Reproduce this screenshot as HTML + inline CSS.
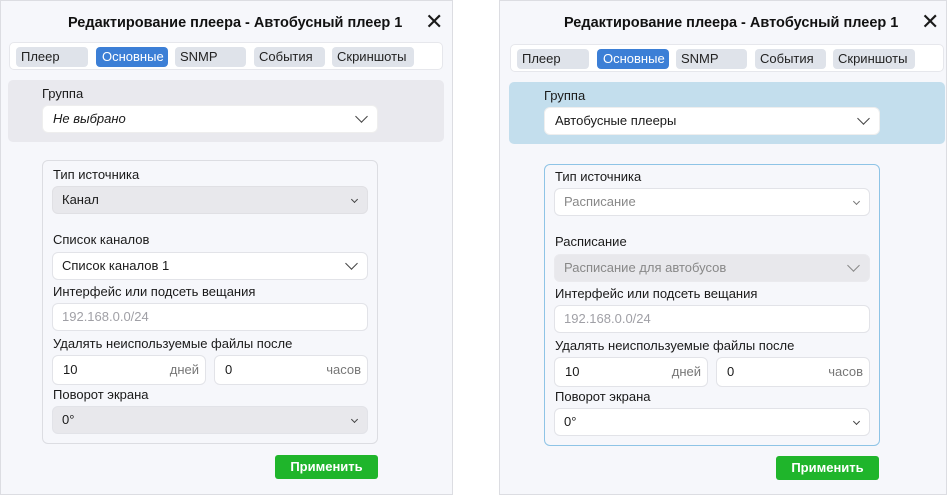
<!DOCTYPE html>
<html><head><meta charset="utf-8"><style>
*{box-sizing:border-box;margin:0;padding:0}
body{width:947px;height:495px;background:#fff;position:relative;overflow:hidden;font-family:"Liberation Sans","DejaVu Sans",sans-serif;color:#1a1a1a}
.p{position:absolute;top:0;height:495px;background:#f6f7fb;border:1px solid #dcdde2}
.a{position:absolute}
.t{font-size:14.5px;font-weight:bold;color:#111;white-space:nowrap}
.x{font-size:22px;font-weight:bold}
.tabs{background:#fff;border:1px solid #e6e7ec;border-radius:5px;height:28px}
.tab{position:absolute;top:4px;height:20px;background:#dfe3ea;border-radius:4px;font-size:13px;line-height:20px;padding-left:5px;color:#222;white-space:nowrap;overflow:hidden}
.tab.on{background:#3c7fd6;color:#fff;padding-left:6px}
.lbl{font-size:13px;color:#1a1a1a;white-space:nowrap}
.f{height:28px;border:1px solid #e2e3e8;border-radius:6px;background:#fff;font-size:13px;line-height:26px;padding-left:9px;white-space:nowrap}
.g{background:#e8e8ec}
.ch{position:absolute;right:10px;top:9px;width:8px;height:8px;border-right:1.5px solid #444;border-bottom:1.5px solid #444;transform:rotate(45deg)}
.chb{right:11px;top:6px;width:9px;height:9px}
.ch.s{width:5px;height:5px;top:10px;right:10px}
.suf{position:absolute;right:6px;top:0;color:#777}
.btn{background:#1fb52b;color:#fff;font-size:13px;font-weight:bold;border-radius:3px;text-align:center;line-height:24px;height:24px;width:103px}
</style></head><body>

<div class="p" style="left:0;width:453px"></div>
<div class="p" style="left:499px;width:448px"></div>

<!-- LEFT -->
<div class="a t" style="left:68px;top:15px">Редактирование плеера - Автобусный плеер 1</div>
<div class="a x" style="left:425px;top:9px">✕</div>
<div class="a tabs" style="left:9px;top:42px;width:434px">
 <div class="tab" style="left:6px;width:72px">Плеер</div>
 <div class="tab on" style="left:86px;width:72px">Основные</div>
 <div class="tab" style="left:165px;width:71px">SNMP</div>
 <div class="tab" style="left:244px;width:71px">События</div>
 <div class="tab" style="left:322px;width:82px">Скриншоты</div>
</div>
<div class="a" style="left:8px;top:80px;width:436px;height:62px;background:#e9e9ee;border-radius:5px"></div>
<div class="a lbl" style="left:42px;top:86px">Группа</div>
<div class="a f" style="left:42px;top:105px;width:336px;height:28px;font-style:italic;border-color:#eee;padding-left:10px">Не выбрано<span class="ch chb"></span></div>
<div class="a" style="left:42px;top:160px;width:336px;height:284px;border:1px solid #dcdde2;border-radius:6px;background:#f6f7fb"></div>
<div class="a lbl" style="left:53px;top:167px">Тип источника</div>
<div class="a f g" style="left:52px;top:186px;width:316px;border-color:#e0e0e4">Канал<span class="ch s"></span></div>
<div class="a lbl" style="left:53px;top:232px">Список каналов</div>
<div class="a f" style="left:52px;top:252px;width:316px">Список каналов 1<span class="ch chb"></span></div>
<div class="a lbl" style="left:53px;top:284px">Интерфейс или подсеть вещания</div>
<div class="a f" style="left:52px;top:303px;width:316px;color:#a0a0a6">192.168.0.0/24</div>
<div class="a lbl" style="left:53px;top:336px">Удалять неиспользуемые файлы после</div>
<div class="a f" style="left:52px;top:355px;width:154px;height:30px;line-height:28px;padding-left:10px">10<span class="suf">дней</span></div>
<div class="a f" style="left:214px;top:355px;width:154px;height:30px;line-height:28px;padding-left:10px">0<span class="suf">часов</span></div>
<div class="a lbl" style="left:53px;top:387px">Поворот экрана</div>
<div class="a f g" style="left:52px;top:406px;width:316px">0°<span class="ch s"></span></div>
<div class="a btn" style="left:275px;top:455px">Применить</div>

<!-- RIGHT -->
<div class="a t" style="left:564px;top:15px">Редактирование плеера - Автобусный плеер 1</div>
<div class="a x" style="left:921px;top:9px">✕</div>
<div class="a tabs" style="left:510px;top:44px;width:434px">
 <div class="tab" style="left:6px;width:72px">Плеер</div>
 <div class="tab on" style="left:86px;width:72px">Основные</div>
 <div class="tab" style="left:165px;width:71px">SNMP</div>
 <div class="tab" style="left:244px;width:71px">События</div>
 <div class="tab" style="left:322px;width:82px">Скриншоты</div>
</div>
<div class="a" style="left:509px;top:82px;width:436px;height:62px;background:#c3deed;border-radius:5px"></div>
<div class="a lbl" style="left:544px;top:88px">Группа</div>
<div class="a f" style="left:544px;top:107px;width:336px;height:28px;border-color:#eee;padding-left:10px">Автобусные плееры<span class="ch chb"></span></div>
<div class="a" style="left:544px;top:164px;width:336px;height:282px;border:1px solid #8ec4e6;border-radius:6px;background:#f6f7fb"></div>
<div class="a lbl" style="left:555px;top:169px">Тип источника</div>
<div class="a f" style="left:554px;top:188px;width:316px;color:#888">Расписание<span class="ch s" style="border-color:#777"></span></div>
<div class="a lbl" style="left:555px;top:234px">Расписание</div>
<div class="a f g" style="left:554px;top:254px;width:316px;color:#888;border-color:#eaeaee">Расписание для автобусов<span class="ch chb" style="border-color:#888"></span></div>
<div class="a lbl" style="left:555px;top:286px">Интерфейс или подсеть вещания</div>
<div class="a f" style="left:554px;top:305px;width:316px;color:#a0a0a6">192.168.0.0/24</div>
<div class="a lbl" style="left:555px;top:338px">Удалять неиспользуемые файлы после</div>
<div class="a f" style="left:554px;top:357px;width:154px;height:30px;line-height:28px;padding-left:10px">10<span class="suf">дней</span></div>
<div class="a f" style="left:716px;top:357px;width:154px;height:30px;line-height:28px;padding-left:10px">0<span class="suf">часов</span></div>
<div class="a lbl" style="left:555px;top:389px">Поворот экрана</div>
<div class="a f" style="left:554px;top:408px;width:316px">0°<span class="ch s"></span></div>
<div class="a btn" style="left:776px;top:456px">Применить</div>
</body></html>
